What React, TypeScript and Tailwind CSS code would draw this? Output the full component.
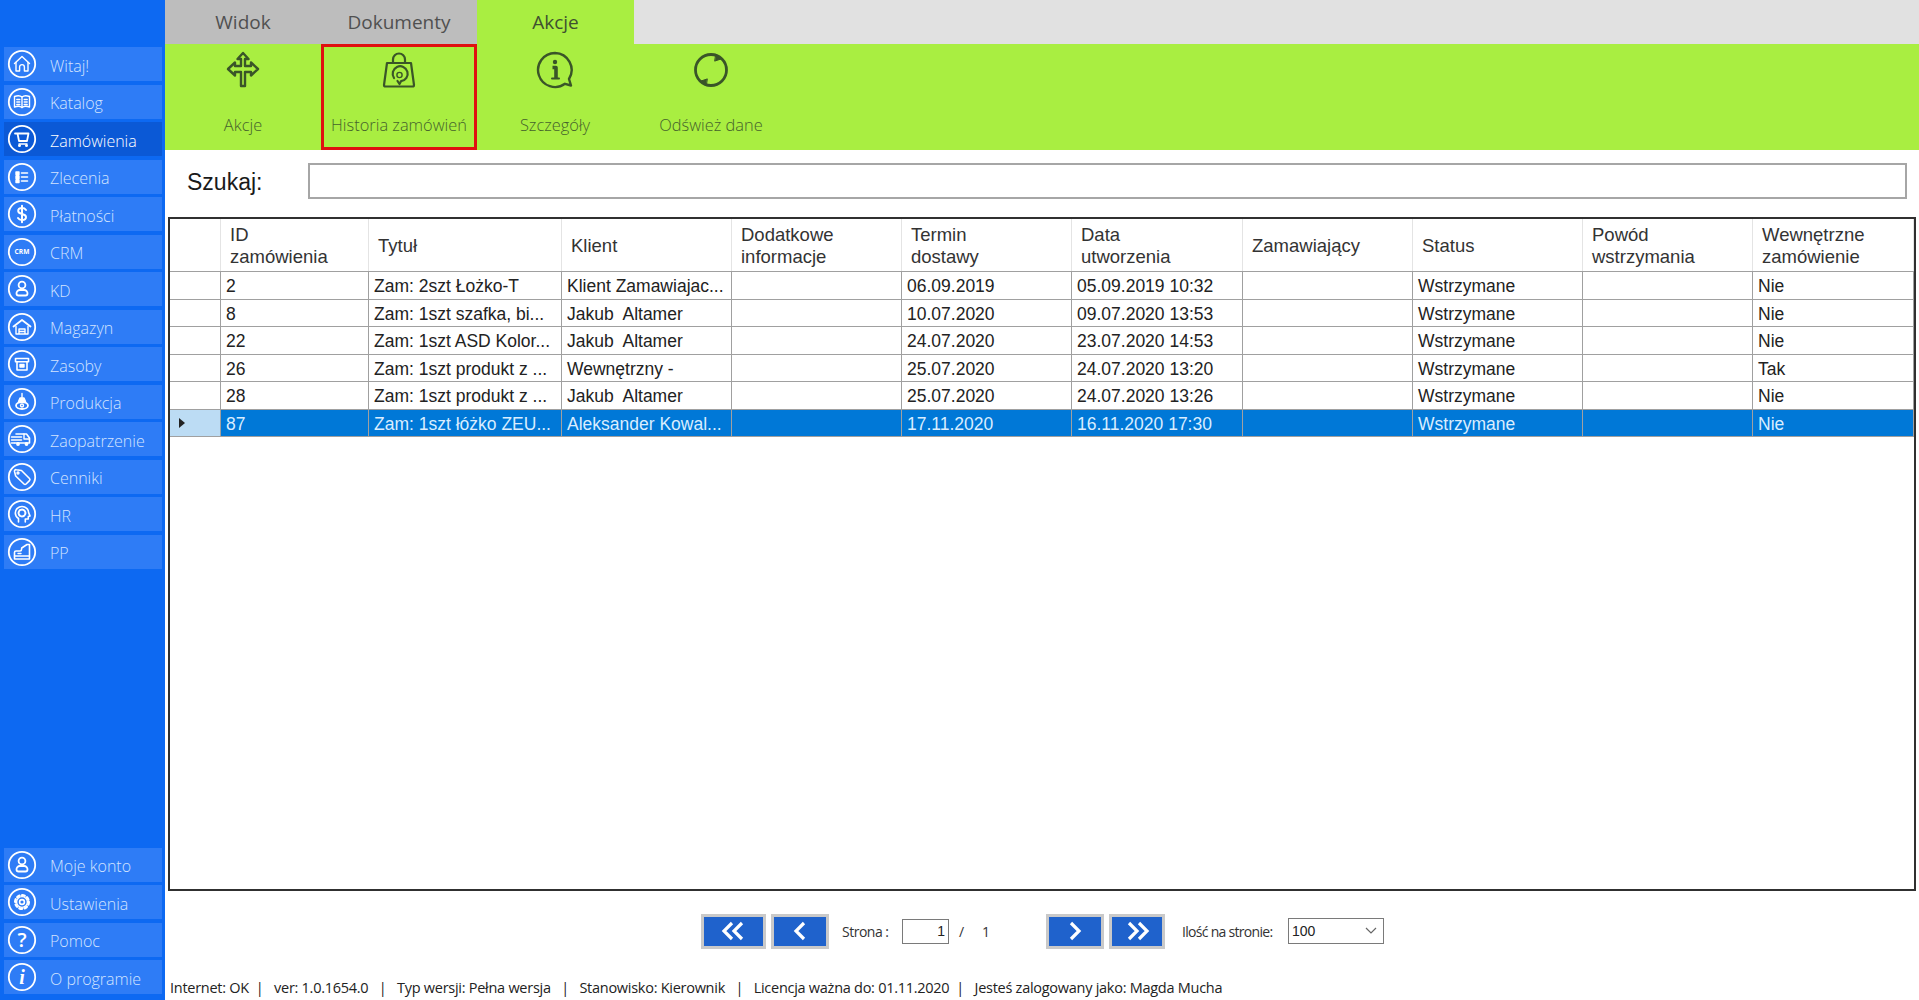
import type { ReactNode } from "react";

const strokeProps = { fill: "none", stroke: "currentColor", strokeLinecap: "round", strokeLinejoin: "round" } as const;

function NavIcon({ children }: { children: ReactNode }) {
  return (
    <svg viewBox="0 0 30 30" className="w-[30px] h-[30px] shrink-0 text-white" {...strokeProps} strokeWidth={1.4}>
      <circle cx="15" cy="15" r="13.2" strokeWidth={1.8} />
      {children}
    </svg>
  );
}

const icons: Record<string, ReactNode> = {
  home: (
    <>
      <path d="M7.5 14.5 15 7.5l7.5 7" />
      <path d="M9 13.5V22h3.6v-4a2.4 2.4 0 0 1 4.8 0v4H21v-8.5" />
    </>
  ),
  book: (
    <>
      <path d="M7.5 9.5c3-1 6-.8 7.5.6 1.5-1.4 4.5-1.6 7.5-.6V20c-3-1-6-.8-7.5.6-1.5-1.4-4.5-1.6-7.5-.6Z" />
      <path d="M15 10.5v10M9.8 12.5h3M9.8 15h3M9.8 17.5h3M17.2 12.5h3M17.2 15h3M17.2 17.5h3" />
    </>
  ),
  cart: (
    <>
      <path d="M8 9.5h13.5l-1.500 7.500h-8L10.500 9.500" strokeWidth={1.8} />
      <path d="M12 20h8" />
      <circle cx="12.500" cy="21.500" r="0.8" />
      <circle cx="19.500" cy="21.500" r="0.8" />
    </>
  ),
  list: (
    <>
      <path d="M9 10h3v2.500H9ZM9 14h3v2.500H9ZM9 18h3v2.500H9Z" fill="currentColor" />
      <path d="M14.500 11h6M14.500 15h6M14.500 19h6" strokeWidth={1.6} />
    </>
  ),
  dollar: (
    <path d="M19 11c-1-1.400-2.400-1.900-4-1.900-2.200 0-3.800 1.100-3.800 2.900 0 4 7.800 2 7.800 6 0 1.900-1.700 3-4 3-1.700 0-3.200-.7-4-2M15 6.800v16.400" strokeWidth={2} />
  ),
  crm: (
    <text x="15" y="17.200" textAnchor="middle" fontSize="6.600" fontWeight="700" fill="currentColor" stroke="none" fontFamily="'Open Sans', sans-serif">
      CRM
    </text>
  ),
  person: (
    <>
      <circle cx="15" cy="11" r="3.400" strokeWidth={1.8} />
      <path d="M9.500 19.500a3.300 3.300 0 0 1 3.300-3.500h4.400a3.300 3.300 0 0 1 3.300 3.500 2 2 0 0 1-2 2h-7a2 2 0 0 1-2-2Z" strokeWidth={1.8} />
    </>
  ),
  warehouse: (
    <>
      <path d="M6.500 14.500 15 8l8.500 6.500" strokeWidth={1.8} />
      <path d="M9 14.500V22h12v-7.500M12 22v-5h6v5M12 19.500h6" />
    </>
  ),
  box: (
    <>
      <path d="M8.500 9.500h13v3.200h-13ZM10 12.700V21h10v-8.300" strokeWidth={1.6} />
      <path d="M13 15.500h4v2.500h-4Z" fill="currentColor" />
    </>
  ),
  lamp: (
    <>
      <path d="M15 6.500V11M13 11h4l1.500 3.500h-7Z" fill="currentColor" />
      <ellipse cx="15" cy="18.500" rx="6" ry="3.500" strokeWidth={1.8} />
      <circle cx="15" cy="18.500" r="1.500" />
    </>
  ),
  truck: (
    <>
      <path d="M9 10h10.500l3 4v5H8" strokeWidth={1.6} />
      <path d="M4.500 13h10M4.500 16h10M4.500 19h3" strokeWidth={1.6} />
      <path d="M17 10v5h5.500" />
      <circle cx="11" cy="20" r="1.200" fill="currentColor" />
      <circle cx="19.500" cy="20" r="1.200" fill="currentColor" />
    </>
  ),
  tag: (
    <>
      <path d="M7.500 9.500a1.500 1.500 0 0 1 1.800-1.800l5.200.8 8 8a1.500 1.500 0 0 1 0 2.100l-3.400 3.400a1.500 1.500 0 0 1-2.100 0l-8.300-8Z" strokeWidth={1.6} />
      <circle cx="11" cy="11" r="1" />
    </>
  ),
  head: (
    <>
      <path d="M11.500 23v-3.500c-2-1.300-3.200-3.100-3.200-5.500 0-3.700 3-6.500 6.700-6.500s6.700 2.800 6.700 6.400l1.300 3-1.700.6V20h-3v3" strokeWidth={1.6} />
      <circle cx="15" cy="14" r="3.400" strokeWidth={2} strokeDasharray="1.500 1" />
    </>
  ),
  factory: (
    <>
      <path d="M7.500 22v-6.500c0-1 .8-1.500 1.500-1.500h4c1 0 1.500-.6 1.500-1.500l.2-1.500L20 7.500h2.500V22Z" strokeWidth={1.6} />
      <path d="M7.500 19h15M11 16.500h3" />
    </>
  ),
  gear: (
    <>
      <circle cx="15" cy="15" r="6.800" strokeWidth={2.400} strokeDasharray="2.600 2.740" />
      <circle cx="15" cy="15" r="5.400" />
      <circle cx="15" cy="15" r="2.400" strokeWidth={1.600} />
    </>
  ),
  question: (
    <text x="15" y="22" textAnchor="middle" fontSize="20" fontWeight="600" fill="currentColor" stroke="none" fontFamily="'Open Sans', sans-serif">
      ?
    </text>
  ),
  info: (
    <text x="15" y="22" textAnchor="middle" fontSize="20" fontWeight="700" fontStyle="italic" fill="currentColor" stroke="none" fontFamily="'Liberation Serif', serif">
      i
    </text>
  ),
};

const topNav = [
  ["Witaj!", "home"],
  ["Katalog", "book"],
  ["Zamówienia", "cart"],
  ["Zlecenia", "list"],
  ["Płatności", "dollar"],
  ["CRM", "crm"],
  ["KD", "person"],
  ["Magazyn", "warehouse"],
  ["Zasoby", "box"],
  ["Produkcja", "lamp"],
  ["Zaopatrzenie", "truck"],
  ["Cenniki", "tag"],
  ["HR", "head"],
  ["PP", "factory"],
];

const bottomNav = [
  ["Moje konto", "person"],
  ["Ustawienia", "gear"],
  ["Pomoc", "question"],
  ["O programie", "info"],
];

function NavItem({ label, icon }: { label: string; icon: string }) {
  const active = label === "Zamówienia";
  return (
    <div
      className={`flex items-center h-[34px] mb-[3.5px] gap-[13px] text-[16px] font-light ${
        active ? "bg-[#0b59d6] text-white" : "bg-[#2e7cf6] text-[#d3e4ff]"
      }`}
    >
      <div className="ml-[3px]">
        <NavIcon>{icons[icon]}</NavIcon>
      </div>
      <span className="mt-[3px]">{label}</span>
    </div>
  );
}

const columns = [
  { key: "id", title: ["ID", "zamówienia"], width: "w-[148px]" },
  { key: "title", title: ["Tytuł"], width: "w-[193px]" },
  { key: "client", title: ["Klient"], width: "w-[170px]" },
  { key: "info", title: ["Dodatkowe", "informacje"], width: "w-[170px]" },
  { key: "term", title: ["Termin", "dostawy"], width: "w-[170px]" },
  { key: "created", title: ["Data", "utworzenia"], width: "w-[171px]" },
  { key: "buyer", title: ["Zamawiający"], width: "w-[170px]" },
  { key: "status", title: ["Status"], width: "w-[170px]" },
  { key: "reason", title: ["Powód", "wstrzymania"], width: "w-[170px]" },
  { key: "internal", title: ["Wewnętrzne", "zamówienie"], width: "flex-1" },
];

const rows: string[][] = [
  ["2", "Zam: 2szt Łożko-T", "Klient Zamawiajac...", "", "06.09.2019", "05.09.2019 10:32", "", "Wstrzymane", "", "Nie"],
  ["8", "Zam: 1szt szafka, bi...", "Jakub  Altamer", "", "10.07.2020", "09.07.2020 13:53", "", "Wstrzymane", "", "Nie"],
  ["22", "Zam: 1szt ASD Kolor...", "Jakub  Altamer", "", "24.07.2020", "23.07.2020 14:53", "", "Wstrzymane", "", "Nie"],
  ["26", "Zam: 1szt produkt z ...", "Wewnętrzny -", "", "25.07.2020", "24.07.2020 13:20", "", "Wstrzymane", "", "Tak"],
  ["28", "Zam: 1szt produkt z ...", "Jakub  Altamer", "", "25.07.2020", "24.07.2020 13:26", "", "Wstrzymane", "", "Nie"],
  ["87", "Zam: 1szt łóżko ZEU...", "Aleksander Kowal...", "", "17.11.2020", "16.11.2020 17:30", "", "Wstrzymane", "", "Nie"],
];

function RibbonIcon({ name }: { name: string }) {
  const cls = "w-[40px] h-[40px] text-[#3a5528]";
  if (name === "move")
    return (
      <svg viewBox="0 0 40 40" className={cls} {...strokeProps} strokeWidth={2.400}>
        <path d="M20 3l5.500 6h-3.500v7h6v-3.500l7 6.500-7 6.500V22h-6v14h-4V22h-6v3.500L5 19l7-6.500V16h6V9h-3.500Z" />
      </svg>
    );
  if (name === "bag")
    return (
      <svg viewBox="0 0 40 40" className={cls} {...strokeProps} strokeWidth={2.200}>
        <path d="M8 13h24l3 22a1.500 1.500 0 0 1-1.500 1.500h-27A1.500 1.500 0 0 1 5 35Z" />
        <path d="M14 13v-3.500a6 6 0 0 1 12 0V13" />
        <path d="M15 28a7.500 7.500 0 1 1 7 3.200l-1.500 2.800-2-3" />
        <circle cx="20.500" cy="25" r="2.600" strokeWidth={1.400} />
      </svg>
    );
  if (name === "info")
    return (
      <svg viewBox="0 0 40 40" className={cls} {...strokeProps} strokeWidth={2.400}>
        <path d="M20 3a17 17 0 1 0 10 30.800l6 1.700-2-6.500A17 17 0 0 0 20 3Z" />
        <circle cx="20" cy="12" r="2.200" fill="currentColor" stroke="none" />
        <path d="M17.500 17.500H21V28" strokeWidth={3.600} strokeLinecap="butt" />
        <path d="M17 28.500h7" strokeWidth={2} />
      </svg>
    );
  return (
    <svg viewBox="0 0 40 40" className={cls} {...strokeProps} strokeWidth={2.800}>
      <circle cx="20" cy="20" r="15.500" />
      <path d="M25 4.500l5 4.500-6 2ZM15 35.500l-5-4.500 6-2Z" fill="currentColor" strokeWidth={1} />
    </svg>
  );
}

const ribbon = [
  { label: "Akcje", icon: "move", marked: false },
  { label: "Historia zamówień", icon: "bag", marked: true },
  { label: "Szczegóły", icon: "info", marked: false },
  { label: "Odśwież dane", icon: "refresh", marked: false },
];

function PageButton({ width, points }: { width: string; points: string[] }) {
  return (
    <div className={`${width} h-[35px] bg-[#1f62cc] border-[3px] border-[#c9c9c9] flex items-center justify-center`}>
      <svg viewBox="0 0 34 22" className="w-[34px] h-[22px]" fill="none" stroke="white" strokeWidth={3.200}>
        {points.map((p) => (
          <polyline key={p} points={p} />
        ))}
      </svg>
    </div>
  );
}

export default function App() {
  return (
    <div className="flex h-[1000px] w-[1919px] overflow-hidden bg-white font-['Open_Sans',sans-serif]">
      <aside className="w-[165px] shrink-0 bg-[#0d69f2] flex flex-col pt-[47px] pl-[4px] pr-[3.500px] pb-[2.500px]">
        {topNav.map(([label, icon]) => (
          <NavItem key={label} label={label} icon={icon} />
        ))}
        <div className="mt-auto">
          {bottomNav.map(([label, icon]) => (
            <NavItem key={label} label={label} icon={icon} />
          ))}
        </div>
      </aside>

      <main className="flex-1 min-w-0 flex flex-col">
        <div className="h-[44px] flex bg-[#e1e1e1] text-[19px] text-[#505050]">
          <div className="w-[156px] bg-[#bdbdbd] flex items-center justify-center">Widok</div>
          <div className="w-[156px] bg-[#bdbdbd] flex items-center justify-center">Dokumenty</div>
          <div className="w-[157px] bg-[#a9ee41] flex items-center justify-center text-[#3f5030]">Akcje</div>
        </div>

        <div className="h-[106px] bg-[#a9ee41] flex">
          {ribbon.map((item) => (
            <div
              key={item.label}
              className={`w-[156px] flex flex-col items-center text-[16.400px] font-light text-[#45622c] border-[3px] pt-[3px] ${
                item.marked ? "border-[#e01010]" : "border-transparent"
              }`}
            >
              <RibbonIcon name={item.icon} />
              <span className="mt-[22.500px]">{item.label}</span>
            </div>
          ))}
        </div>

        <div className="h-[67px] flex items-start pt-[13px] pl-[22px] pr-[12px]">
          <span className="w-[121px] text-[23px] leading-[38px] text-[#1a1a1a] font-['Liberation_Sans',sans-serif]">Szukaj:</span>
          <div className="flex-1 h-[36px] border-2 border-[#a6a6a6] bg-white" />
        </div>

        <div className="h-[674px] mx-[3px] border-2 border-[#303030] bg-white font-['Liberation_Sans',sans-serif] text-[#222]">
          <div className="h-[53px] flex border-b border-[#a0a0a0] text-[18.500px] leading-[22.500px] text-[#333]">
            <div className="w-[51px] border-r border-[#e4e4e4]" />
            {columns.map((col) => (
              <div key={col.key} className={`${col.width} pl-[9px] pt-[2px] flex flex-col justify-center border-r border-[#e4e4e4]`}>
                {col.title.map((line) => (
                  <span key={line}>{line}</span>
                ))}
              </div>
            ))}
          </div>
          {rows.map((row, i) => {
            const selected = i === rows.length - 1;
            return (
              <div
                key={row[0]}
                className={`h-[27.500px] flex border-b border-[#a0a0a0] text-[17.500px] leading-[28.500px] ${
                  selected ? "bg-[#0078d7] text-[#d9edff]" : ""
                }`}
              >
                <div className={`w-[51px] border-r flex items-center pl-[9px] ${selected ? "bg-[#bcdcf4] border-[#a0a0a0]" : "bg-white border-[#a0a0a0]"}`}>
                  {selected && <div className="border-y-[5px] border-y-transparent border-l-[6px] border-l-[#222]" />}
                </div>
                {columns.map((col, c) => (
                  <div key={col.key} className={`${col.width} pl-[5px] whitespace-pre overflow-hidden border-r border-[#a0a0a0]`}>
                    {row[c]}
                  </div>
                ))}
              </div>
            );
          })}
        </div>

        <div className="h-[80px] flex items-center pl-[536px] text-[14px] text-[#333]">
          <PageButton width="w-[65px]" points={["15,3 7,11 15,19", "25,3 17,11 25,19"]} />
          <div className="w-[5px]" />
          <PageButton width="w-[58px]" points={["21,3 13,11 21,19"]} />
          <span className="ml-[13px] w-[60px] tracking-[-0.500px]">Strona :</span>
          <div className="w-[47px] h-[25px] border border-[#7a7a7a] text-right pr-[3px] leading-[23px] text-[#222] font-['Liberation_Sans',sans-serif]">1</div>
          <span className="ml-[10px] w-[23px]">/</span>
          <span className="w-[64px]">1</span>
          <PageButton width="w-[58px]" points={["13,3 21,11 13,19"]} />
          <div className="w-[5px]" />
          <PageButton width="w-[56px]" points={["9,3 17,11 9,19", "19,3 27,11 19,19"]} />
          <span className="ml-[17px] w-[106px] tracking-[-0.700px]">Ilość na stronie:</span>
          <div className="w-[96px] h-[26px] border border-[#7a7a7a] flex items-center justify-between pl-[3px] pr-[6px] text-[#222] font-['Liberation_Sans',sans-serif]">
            <span>100</span>
            <svg viewBox="0 0 12 8" className="w-[12px] h-[8px]" fill="none" stroke="#666" strokeWidth={1.200}>
              <polyline points="1,1 6,6 11,1" />
            </svg>
          </div>
        </div>

        <div className="h-[29px] pl-[5px] pt-[2px] leading-[29px] text-[14.500px] text-[#222] whitespace-pre tracking-[-0.270px]">
          {"Internet: OK  |   ver: 1.0.1654.0   |   Typ wersji: Pełna wersja   |   Stanowisko: Kierownik   |   Licencja ważna do: 01.11.2020  |   Jesteś zalogowany jako: Magda Mucha"}
        </div>
      </main>
    </div>
  );
}
